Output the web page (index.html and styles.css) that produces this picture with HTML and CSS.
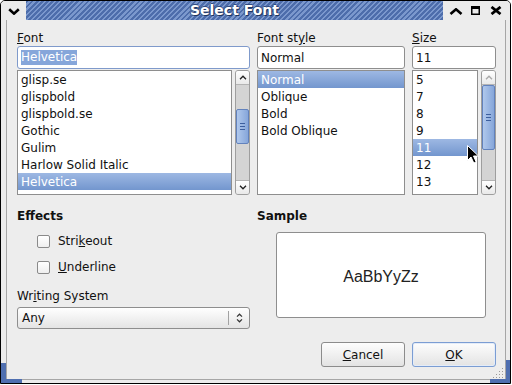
FILE: index.html
```html
<!DOCTYPE html>
<html>
<head>
<meta charset="utf-8">
<link rel="stylesheet" href="styles.css">
</head>
<body>
<div class="window">
  <div class="titlebar">
    <div class="tb-left">
      <svg width="12" height="7" viewBox="0 0 12 7"><path d="M1.2 1.2 L6 5.6 L10.8 1.2" fill="none" stroke="#000" stroke-width="2.6"/></svg>
    </div>
    <div class="tb-title">Select Font</div>
    <div class="tb-right">
      <svg class="tb-up" width="14" height="7" viewBox="0 0 14 7"><path d="M1.5 6 L7 1.3 L12.5 6" fill="none" stroke="#000" stroke-width="2.6"/></svg>
      <svg class="tb-max" width="9" height="9" viewBox="0 0 9 9"><rect x="0.75" y="0.75" width="7.5" height="7.5" fill="none" stroke="#000" stroke-width="1.5"/><rect x="0" y="0" width="9" height="3" fill="#000"/></svg>
      <svg class="tb-close" width="12" height="9" viewBox="0 0 12 9"><path d="M1.5 1 L10.5 8 M10.5 1 L1.5 8" fill="none" stroke="#000" stroke-width="2.8"/></svg>
    </div>
  </div>
  <div class="frame">
    <div class="client">
      <div class="top">
        <div class="col">
          <div class="label"><u>F</u>ont</div>
          <div class="entry focus"><span class="sel-text">Helvetica</span></div>
          <div class="listrow">
            <div class="list">
              <div class="item">glisp.se</div>
              <div class="item">glispbold</div>
              <div class="item">glispbold.se</div>
              <div class="item">Gothic</div>
              <div class="item">Gulim</div>
              <div class="item">Harlow Solid Italic</div>
              <div class="item sel">Helvetica</div>
            </div>
            <div class="sb">
              <div class="sb-btn"><svg width="8" height="5" viewBox="0 0 8 5"><path d="M1 4.2 L4 1.2 L7 4.2" fill="none" stroke="#222" stroke-width="1.3"/></svg></div>
              <div class="sb-track"><div class="sb-thumb thumb-font"><svg width="5" height="7" viewBox="0 0 5 7"><path d="M0 0.5 H5 M0 3.5 H5 M0 6.5 H5" stroke="#3d5f9e" stroke-width="1"/></svg></div></div>
              <div class="sb-btn down"><svg width="8" height="5" viewBox="0 0 8 5"><path d="M1 0.8 L4 3.8 L7 0.8" fill="none" stroke="#222" stroke-width="1.3"/></svg></div>
            </div>
          </div>
        </div>
        <div class="col">
          <div class="label">Font st<u>y</u>le</div>
          <div class="entry">Normal</div>
          <div class="listrow">
            <div class="list">
              <div class="item sel">Normal</div>
              <div class="item">Oblique</div>
              <div class="item">Bold</div>
              <div class="item">Bold Oblique</div>
            </div>
          </div>
        </div>
        <div class="col">
          <div class="label"><u>S</u>ize</div>
          <div class="entry">11</div>
          <div class="listrow size-row">
            <div class="list">
              <div class="item">5</div>
              <div class="item">7</div>
              <div class="item">8</div>
              <div class="item">9</div>
              <div class="item sel">11</div>
              <div class="item">12</div>
              <div class="item">13</div>
            </div>
            <div class="sb">
              <div class="sb-btn"><svg width="8" height="5" viewBox="0 0 8 5"><path d="M1 4.2 L4 1.2 L7 4.2" fill="none" stroke="#a8a8a8" stroke-width="1.3"/></svg></div>
              <div class="sb-track"><div class="sb-thumb thumb-size"><svg width="5" height="7" viewBox="0 0 5 7"><path d="M0 0.5 H5 M0 3.5 H5 M0 6.5 H5" stroke="#3d5f9e" stroke-width="1"/></svg></div></div>
              <div class="sb-btn down"><svg width="8" height="5" viewBox="0 0 8 5"><path d="M1 0.8 L4 3.8 L7 0.8" fill="none" stroke="#222" stroke-width="1.3"/></svg></div>
            </div>
            <svg class="cursor" width="13" height="19" viewBox="0 0 13 19"><path d="M0.5 0.5 L0.5 15.5 L4 12 L6.8 18 L9.2 17 L6.5 11 L11.5 11 Z" fill="#000" stroke="#fff" stroke-width="1"/></svg>
          </div>
        </div>
      </div>

      <div class="middle">
        <div class="effects">
          <div class="heading">Effects</div>
          <div class="check first"><span class="box"></span><span>Stri<u>k</u>eout</span></div>
          <div class="check"><span class="box"></span><span><u>U</u>nderline</span></div>
          <div class="label ws-label">Wr<u>i</u>ting System</div>
          <div class="combo">
            <span>Any</span>
            <span class="combo-sep"></span>
            <svg class="combo-arrows" width="7" height="10" viewBox="0 0 7 10"><path d="M1 3.6 L3.5 1.2 L6 3.6 M1 6.4 L3.5 8.8 L6 6.4" fill="none" stroke="#333" stroke-width="1.2"/></svg>
          </div>
        </div>
        <div class="sample">
          <div class="heading">Sample</div>
          <div class="sample-box">AaBbYyZz</div>
        </div>
      </div>

      <div class="buttons">
        <div class="btn"><span><u>C</u>ancel</span></div>
        <div class="btn default"><span><u>O</u>K</span></div>
      </div>

      <svg class="grip" width="11" height="11" viewBox="0 0 11 11">
        <g fill="#9a9a9a">
          <rect x="9" y="1" width="1" height="1"/>
          <rect x="6" y="4" width="1" height="1"/><rect x="9" y="4" width="1" height="1"/>
          <rect x="3" y="7" width="1" height="1"/><rect x="6" y="7" width="1" height="1"/><rect x="9" y="7" width="1" height="1"/>
          <rect x="0" y="10" width="1" height="1"/><rect x="3" y="10" width="1" height="1"/><rect x="6" y="10" width="1" height="1"/><rect x="9" y="10" width="1" height="1"/>
        </g>
      </svg>
    </div>
  </div>
</div>
</body>
</html>
```
FILE: styles.css
```css
html, body {
  margin: 0;
  padding: 0;
  width: 512px;
  height: 385px;
  overflow: hidden;
  background: #ffffff;
}
body {
  font-family: "DejaVu Sans", sans-serif;
  font-size: 12px;
  color: #111;
}
u { text-decoration: underline; text-underline-offset: 1px; }

.window {
  box-sizing: border-box;
  width: 511px;
  height: 384px;
  border: 1px solid #000;
  border-radius: 5px 5px 0 0;
  background: #ebebeb;
  display: flex;
  flex-direction: column;
  position: relative;
  overflow: hidden;
}
.window::before,
.window::after {
  content: "";
  position: absolute;
  bottom: 0;
  border-bottom: 4px solid #4f6fb0;
  z-index: 5;
}
.window::before {
  left: 0;
  width: 16px;
  height: 16px;
  border-left: 5px solid #4f6fb0;
}
.window::after {
  right: 0;
  width: 16px;
  height: 19px;
  border-right: 4px solid #4f6fb0;
}

/* title bar */
.titlebar {
  display: flex;
  height: 19px;
  flex: none;
}
.tb-left {
  width: 25px;
  display: flex;
  align-items: center;
  justify-content: center;
  background: #ebebeb;
  padding-top: 1px;
  box-sizing: border-box;
}
.tb-title {
  flex: 1;
  background: repeating-linear-gradient(135deg, #4d6dab 0 2px, #7b98cd 2px 3.6px);
  color: #fff;
  font-weight: bold;
  font-size: 14px;
  line-height: 19px;
  text-align: center;
  text-shadow: 1px 1px 0 #1f355f, -1px 0 0 #2e4a80, 0 -1px 0 #2e4a80;
}
.tb-right {
  width: 67px;
  display: flex;
  align-items: center;
  background: #ebebeb;
}
.tb-up { margin-left: 6px; margin-top: 1px; }
.tb-max { margin-left: 8px; }
.tb-close { margin-left: 10px; }

/* frame / client */
.frame {
  flex: 1;
  display: flex;
  padding: 0 4px 3px 5px;
}
.client {
  flex: 1;
  border: 1px solid #a6a6a6;
  border-top: none;
  background: #ededed;
  padding: 10px 9px 0 10px;
  display: flex;
  flex-direction: column;
  position: relative;
}

.top {
  display: grid;
  grid-template-columns: 233px 148px 84px;
  column-gap: 7px;
}
.col {
  display: flex;
  flex-direction: column;
}
.label {
  height: 16px;
  line-height: 16px;
  white-space: nowrap;
}
.entry {
  box-sizing: border-box;
  height: 23px;
  border: 1px solid #8e8e8e;
  border-radius: 3px;
  background: #fff;
  padding: 0 3px;
  display: flex;
  align-items: center;
}
.entry.focus { border-color: #7f9acb; }
.sel-text {
  background: #86a6da;
  color: #fff;
  line-height: 15px;
}

.listrow {
  display: flex;
  gap: 3px;
  margin-top: 1px;
  height: 125px;
  position: relative;
}
.list {
  flex: 1;
  box-sizing: border-box;
  border: 1px solid #8e8e8e;
  background: #fff;
  overflow: hidden;
}
.item {
  height: 17px;
  line-height: 18px;
  padding-left: 3px;
  white-space: nowrap;
}
.item.sel {
  background: linear-gradient(#9db8e3, #7396ce);
  color: #fff;
}

/* scrollbar */
.sb {
  width: 15px;
  box-sizing: border-box;
  display: flex;
  flex-direction: column;
  border: 1px solid #9e9e9e;
  border-radius: 3px;
  background: #d4d4d4;
  overflow: hidden;
}
.sb-btn {
  height: 14px;
  flex: none;
  box-sizing: border-box;
  background: linear-gradient(#ffffff, #e9e9e9);
  border-bottom: 1px solid #b4b4b4;
  display: flex;
  align-items: center;
  justify-content: center;
}
.sb-btn.down {
  border-bottom: none;
  border-top: 1px solid #b4b4b4;
}
.sb-track {
  flex: 1;
  display: flex;
  flex-direction: column;
}
.sb-thumb {
  box-sizing: border-box;
  border: 1px solid #6282bd;
  border-radius: 2px;
  background: linear-gradient(90deg, #b0c8ec, #86a6da);
  display: flex;
  align-items: center;
  justify-content: center;
}
.thumb-font { margin-top: 24px; height: 35px; }
.thumb-size { margin-top: 0; height: 65px; }

.cursor {
  position: absolute;
  left: 55px;
  top: 75px;
}

/* middle */
.middle {
  display: grid;
  grid-template-columns: 233px 1fr;
  column-gap: 7px;
  margin-top: 13px;
}
.effects, .sample {
  display: flex;
  flex-direction: column;
}
.heading {
  font-weight: bold;
  height: 16px;
  line-height: 16px;
}
.check {
  height: 26px;
  display: flex;
  align-items: center;
  padding-left: 20px;
  gap: 8px;
}
.check.first { margin-top: 4px; }
.box {
  width: 11px;
  height: 11px;
  border: 1px solid #8a8a8a;
  border-radius: 2px;
  background: linear-gradient(#ffffff, #efefef);
}
.ws-label { margin-top: 8px; }
.combo {
  margin-top: 3px;
  box-sizing: border-box;
  height: 22px;
  border: 1px solid #8e8e8e;
  border-radius: 3px;
  background: linear-gradient(#ffffff, #e4e4e4);
  display: flex;
  align-items: center;
  padding-left: 4px;
}
.combo-sep {
  margin-left: auto;
  width: 1px;
  height: 14px;
  background: #a2a2a2;
}
.combo-arrows {
  margin: 0 6px 0 7px;
}

.sample-box {
  margin: 8px 10px 0 19px;
  height: 86px;
  box-sizing: border-box;
  border: 1px solid #8e8e8e;
  border-radius: 3px;
  background: #fff;
  display: flex;
  align-items: center;
  justify-content: center;
  padding-top: 4px;
  font-family: "Liberation Sans", Arial, sans-serif;
  font-size: 16px;
  color: #222;
}

/* buttons */
.buttons {
  display: flex;
  justify-content: flex-end;
  gap: 7px;
  margin-top: 13px;
}
.btn {
  width: 84px;
  height: 25px;
  box-sizing: border-box;
  border: 1px solid #8c8c8c;
  border-radius: 3px;
  background: linear-gradient(#fdfdfd, #e3e3e3);
  display: flex;
  align-items: center;
  justify-content: center;
}
.btn.default {
  border-color: #7b9dd3;
  box-shadow: inset 0 0 0 1px #e4ecf8;
}

.grip {
  position: absolute;
  right: 1px;
  bottom: 1px;
}
```
